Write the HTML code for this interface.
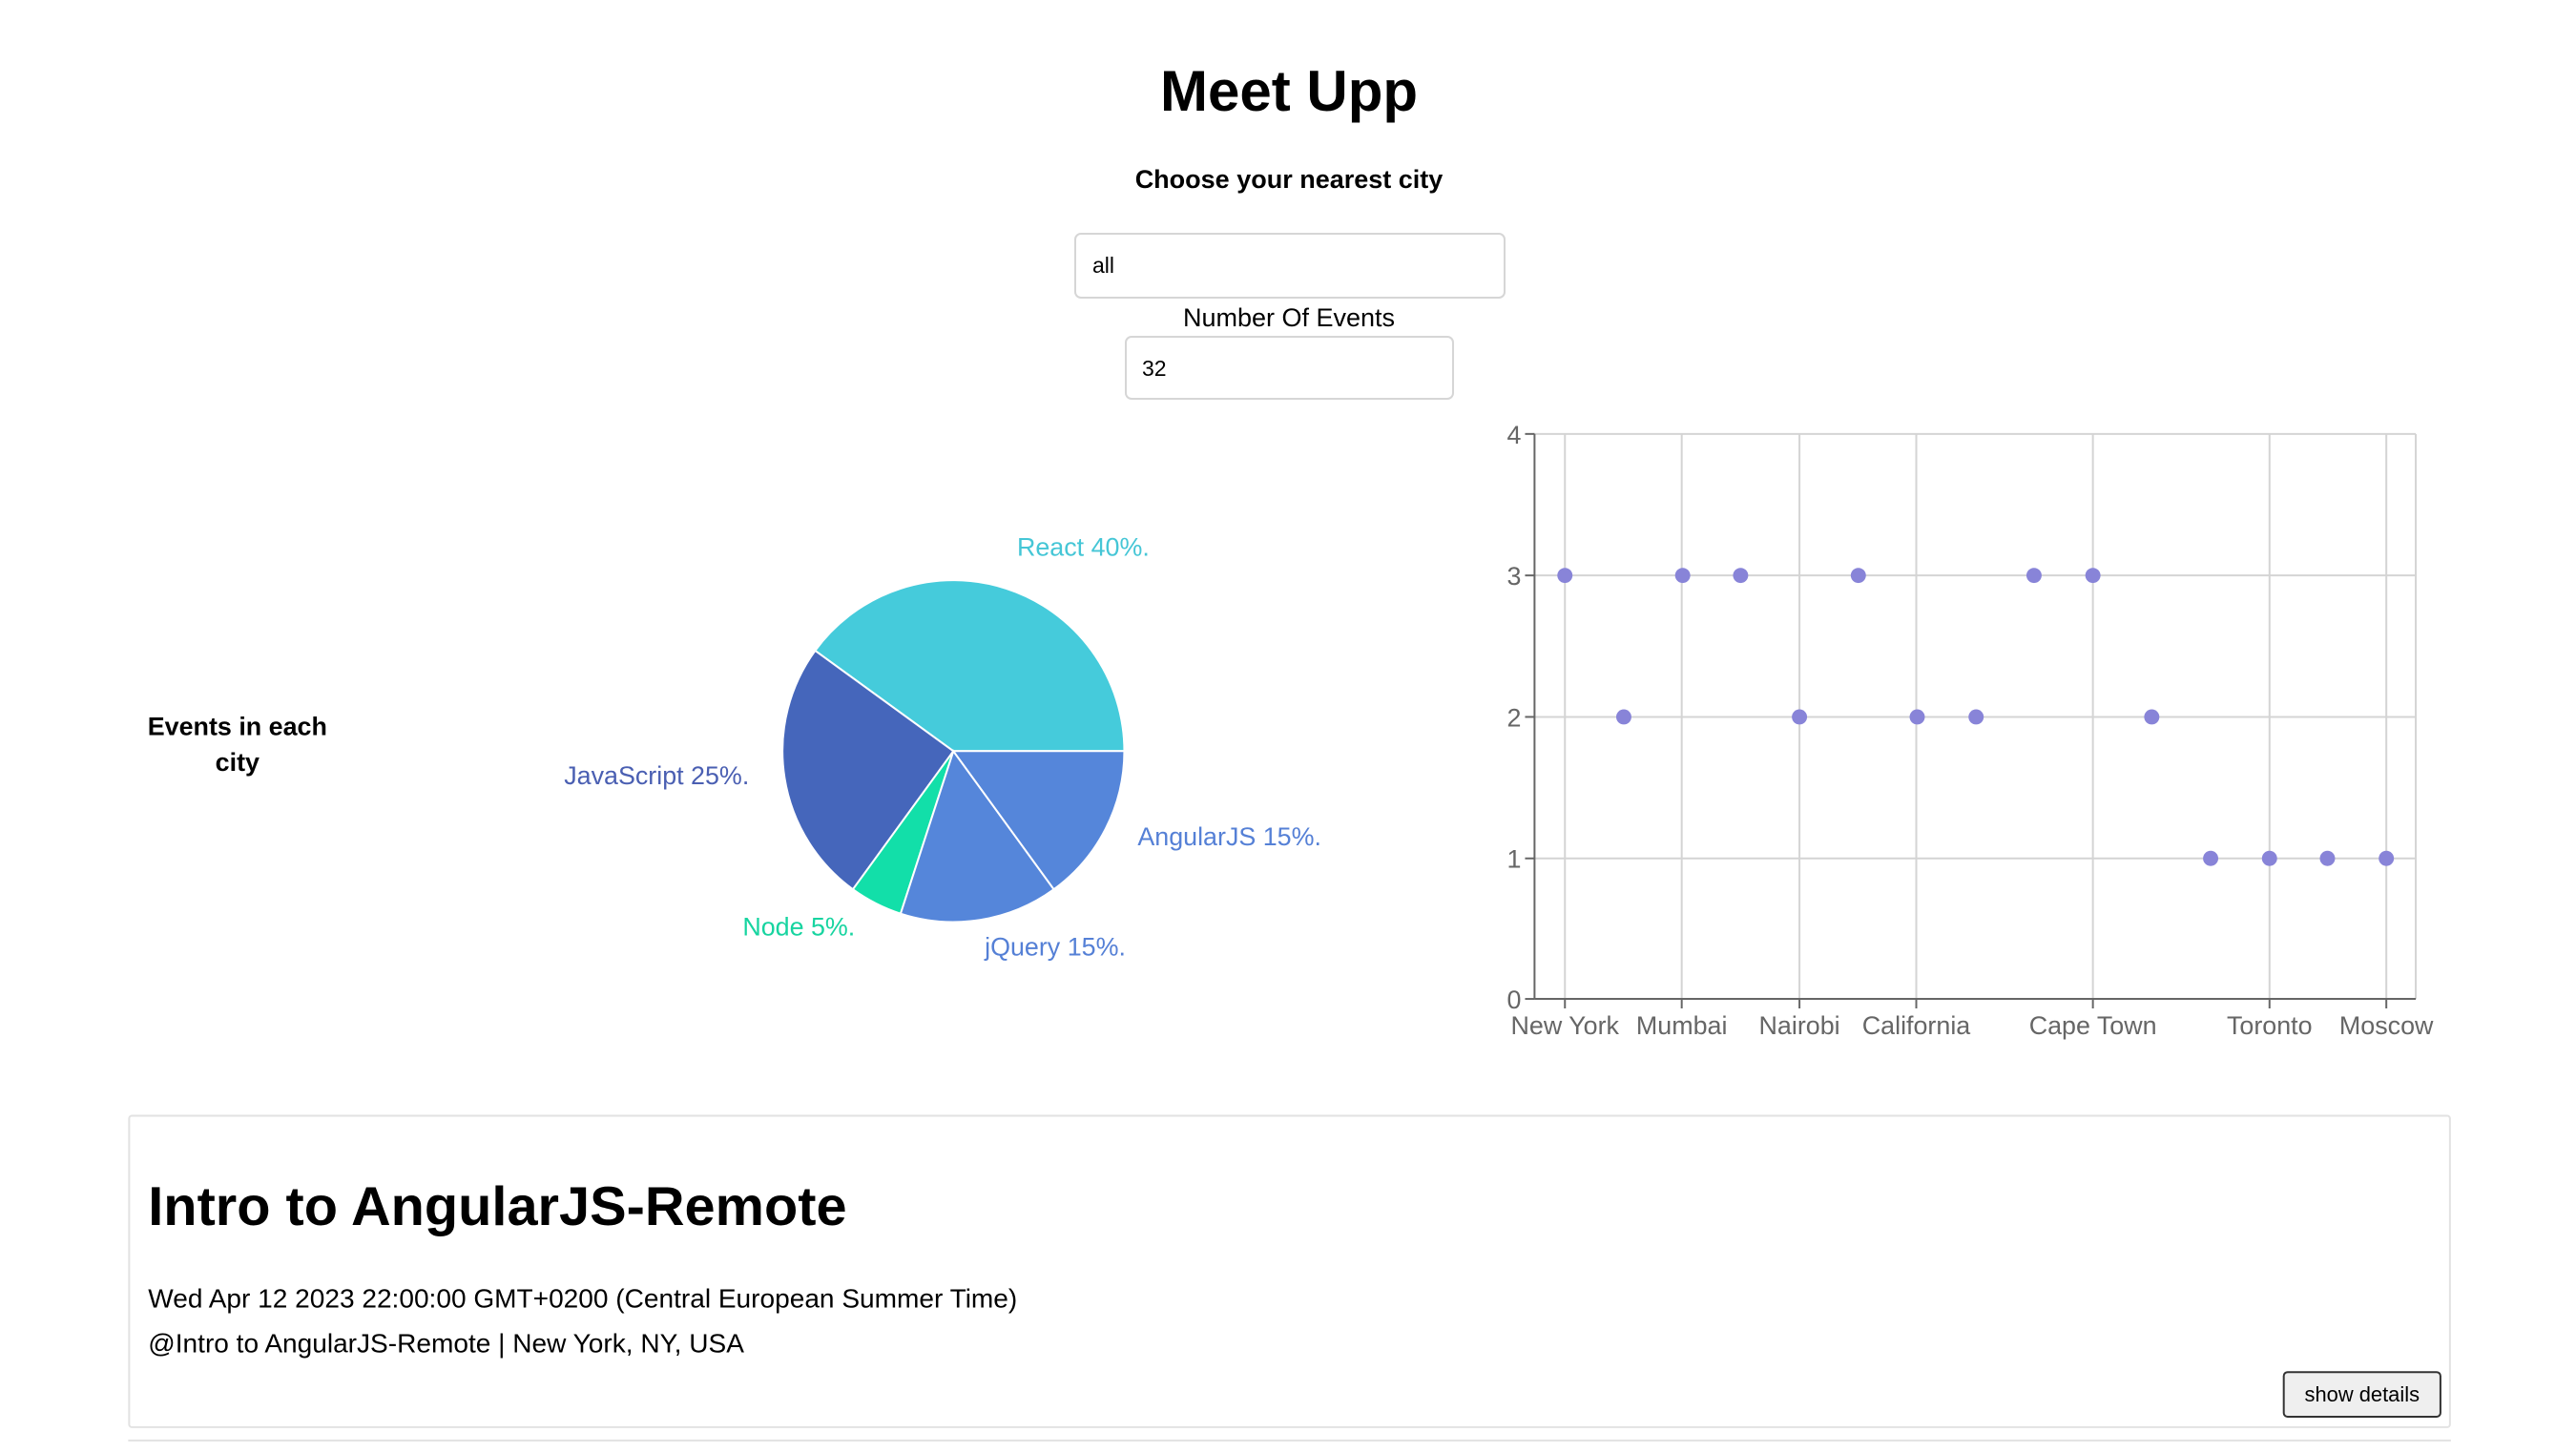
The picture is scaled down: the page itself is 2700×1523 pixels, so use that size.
<!DOCTYPE html>
<html><head><meta charset="utf-8"><style>
html,body{margin:0;padding:0;background:#fff;width:2700px;height:1519px;overflow:hidden;font-family:"Liberation Sans",sans-serif;color:#000}
#w{position:absolute;left:0;top:0;width:2700px;height:1530px;transform:scale(0.9953);transform-origin:0 0}
.a{position:absolute;white-space:nowrap}
.inp{position:absolute;border:2px solid #d6d6d6;border-radius:7px;background:#fff;box-sizing:border-box}
</style></head><body><div id="w">
<div class="a" style="left:150px;width:200px;top:746px;text-align:center;font-size:27px;font-weight:bold;line-height:38px;white-space:normal">Events in each city</div>
<svg class="a" style="left:0;top:0" width="2700" height="1530">
<g stroke="#fff" stroke-width="2">
<path d="M1004,791 L1184,791 A180,180 0 0 0 858.4,685.2 Z" fill="#45cbdb"/>
<path d="M1004,791 L858.4,685.2 A180,180 0 0 0 898.2,936.6 Z" fill="#4566bb"/>
<path d="M1004,791 L898.2,936.6 A180,180 0 0 0 948.4,962.2 Z" fill="#12dfa9"/>
<path d="M1004,791 L948.4,962.2 A180,180 0 0 0 1109.8,936.6 Z" fill="#5586da"/>
<path d="M1004,791 L1109.8,936.6 A180,180 0 0 0 1184,791 Z" fill="#5586da"/>
</g>
<g font-family="Liberation Sans, sans-serif" font-size="27">
<text x="1071" y="585" fill="#45c6d6">React 40%.</text>
<text x="594" y="826" fill="#4a5fb2">JavaScript 25%.</text>
<text x="1198" y="890" fill="#5580d6">AngularJS 15%.</text>
<text x="782" y="985" fill="#17d4a0">Node 5%.</text>
<text x="1037" y="1006" fill="#5580d6">jQuery 15%.</text>
</g>
<g stroke="#d4d4d4" stroke-width="2" fill="none">
<line x1="1614" y1="457" x2="2544" y2="457"/>
<line x1="1614" y1="606" x2="2544" y2="606"/>
<line x1="1614" y1="755" x2="2544" y2="755"/>
<line x1="1614" y1="904" x2="2544" y2="904"/>
<line x1="2544" y1="457" x2="2544" y2="1052"/>
<line x1="1648" y1="457" x2="1648" y2="1052"/>
<line x1="1771" y1="457" x2="1771" y2="1052"/>
<line x1="1895" y1="457" x2="1895" y2="1052"/>
<line x1="2018" y1="457" x2="2018" y2="1052"/>
<line x1="2204" y1="457" x2="2204" y2="1052"/>
<line x1="2390" y1="457" x2="2390" y2="1052"/>
<line x1="2513" y1="457" x2="2513" y2="1052"/>
</g>
<g stroke="#666" stroke-width="2">
<line x1="1616" y1="457" x2="1616" y2="1052"/>
<line x1="1616" y1="1052" x2="2544" y2="1052"/>
<line x1="1606" y1="457" x2="1616" y2="457"/>
<line x1="1606" y1="606" x2="1616" y2="606"/>
<line x1="1606" y1="755" x2="1616" y2="755"/>
<line x1="1606" y1="904" x2="1616" y2="904"/>
<line x1="1606" y1="1052" x2="1616" y2="1052"/>
<line x1="1648" y1="1052" x2="1648" y2="1062"/>
<line x1="1771" y1="1052" x2="1771" y2="1062"/>
<line x1="1895" y1="1052" x2="1895" y2="1062"/>
<line x1="2018" y1="1052" x2="2018" y2="1062"/>
<line x1="2204" y1="1052" x2="2204" y2="1062"/>
<line x1="2390" y1="1052" x2="2390" y2="1062"/>
<line x1="2513" y1="1052" x2="2513" y2="1062"/>
</g>
<g font-family="Liberation Sans, sans-serif" font-size="27" fill="#666">
<text x="1602" y="467" text-anchor="end">4</text>
<text x="1602" y="616" text-anchor="end">3</text>
<text x="1602" y="765" text-anchor="end">2</text>
<text x="1602" y="914" text-anchor="end">1</text>
<text x="1602" y="1062" text-anchor="end">0</text>
<g text-anchor="middle">
<text x="1648" y="1089">New York</text>
<text x="1771" y="1089">Mumbai</text>
<text x="1895" y="1089">Nairobi</text>
<text x="2018" y="1089">California</text>
<text x="2204" y="1089">Cape Town</text>
<text x="2390" y="1089">Toronto</text>
<text x="2513" y="1089">Moscow</text>
</g></g>
<g fill="#8884d8">
<circle cx="1648" cy="606" r="8"/><circle cx="1710" cy="755" r="8"/><circle cx="1772" cy="606" r="8"/><circle cx="1833" cy="606" r="8"/><circle cx="1895" cy="755" r="8"/><circle cx="1957" cy="606" r="8"/><circle cx="2019" cy="755" r="8"/><circle cx="2081" cy="755" r="8"/><circle cx="2142" cy="606" r="8"/><circle cx="2204" cy="606" r="8"/><circle cx="2266" cy="755" r="8"/><circle cx="2328" cy="904" r="8"/><circle cx="2390" cy="904" r="8"/><circle cx="2451" cy="904" r="8"/><circle cx="2513" cy="904" r="8"/>
</g>
</svg>
<div class="a" style="left:135px;top:1174px;width:2446px;height:330px;border:2px solid #e2e2e2;border-radius:4px;box-sizing:border-box"></div>
<div class="a" style="left:135px;top:1516px;width:2446px;height:10px;border-top:2px solid #e2e2e2"></div>
<div class="a" style="left:156px;top:1236px;font-size:58px;font-weight:bold;line-height:70px">Intro to AngularJS-Remote</div>
<div class="a" style="left:156px;top:1348px;font-size:28.2px;line-height:38px">Wed Apr 12 2023 22:00:00 GMT+0200 (Central European Summer Time)</div>
<div class="a" style="left:156px;top:1395px;font-size:28.2px;line-height:38px">@Intro to AngularJS-Remote | New York, NY, USA</div>
<div class="a" style="left:2404px;top:1444px;width:167px;height:49px;box-sizing:border-box;border:2px solid #333;border-radius:5px;background:#efefef;font-size:22px;line-height:45px;text-align:center">show details</div>
</div>
<div class="a" style="left:0;width:2702px;top:56px;text-align:center;font-size:60px;font-weight:bold;line-height:80px">Meet Upp</div>
<div class="a" style="left:0;width:2702px;top:170px;text-align:center;font-size:27px;font-weight:bold;line-height:36px">Choose your nearest city</div>
<div class="inp" style="left:1126px;top:244px;width:452px;height:69px"></div>
<div class="a" style="left:1145px;top:263px;font-size:23px;line-height:30px">all</div>
<div class="a" style="left:0;width:2702px;top:316px;text-align:center;font-size:27px;line-height:34px">Number Of Events</div>
<div class="inp" style="left:1179px;top:352px;width:345px;height:67px"></div>
<div class="a" style="left:1197px;top:371px;font-size:23px;line-height:30px">32</div>
</body></html>
